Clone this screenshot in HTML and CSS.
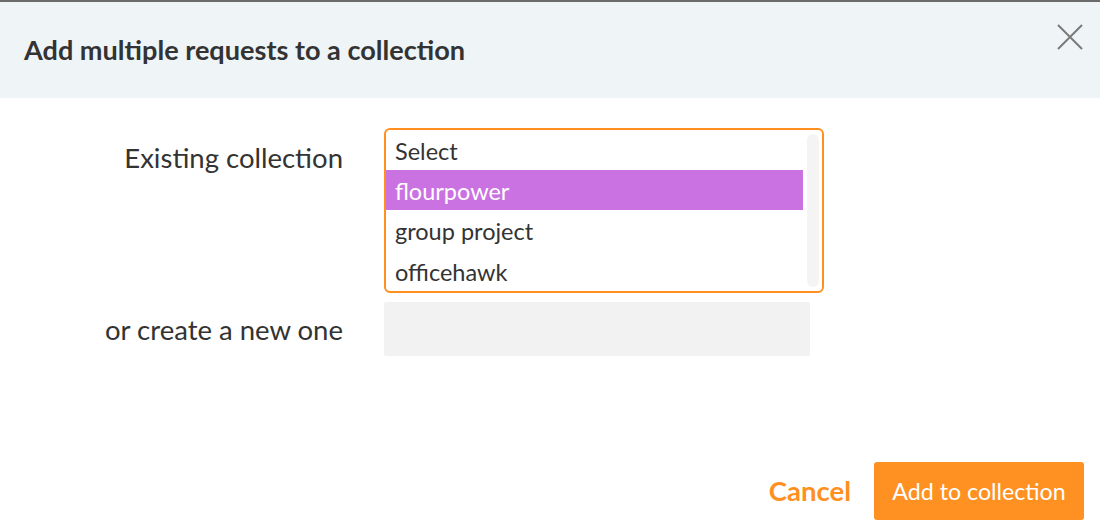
FILE: index.html
```html
<!DOCTYPE html>
<html>
<head>
<meta charset="utf-8">
<link rel="stylesheet" href="styles.css">
</head>
<body>
<div class="modal">
  <div class="modal-header">
    <h1 class="title">Add multiple requests to a collection</h1>
    <button class="close" aria-label="Close">
      <svg width="26" height="26" viewBox="0 0 26 26"><path d="M1 1 L25 25 M25 1 L1 25" stroke="#7a7a7a" stroke-width="2" fill="none"/></svg>
    </button>
  </div>
  <div class="modal-body">
    <div class="row">
      <label class="label label-top">Existing collection</label>
      <div class="listbox">
        <div class="options">
          <div class="option">Select</div>
          <div class="option selected">flourpower</div>
          <div class="option">group project</div>
          <div class="option">officehawk</div>
        </div>
        <div class="scroll-track"></div>
      </div>
    </div>
    <div class="row row-center">
      <label class="label">or create a new one</label>
      <div class="text-input"></div>
    </div>
  </div>
  <div class="modal-footer">
    <button class="btn-cancel">Cancel</button>
    <button class="btn-primary">Add to collection</button>
  </div>
</div>
</body>
</html>
```
FILE: styles.css
```css
html, body {
  margin: 0;
  padding: 0;
  background: #fff;
}
body {
  font-family: Lato, "Open Sans", sans-serif;
  color: #333;
  width: 1100px;
  height: 530px;
  overflow: hidden;
}
.modal {
  display: flex;
  flex-direction: column;
  height: 530px;
  border-top: 2px solid #6b6b6b;
  box-sizing: border-box;
}
.modal-header {
  background: #eff4f7;
  height: 96px;
  display: flex;
  align-items: center;
  justify-content: space-between;
  padding: 0 17px 0 24px;
  flex: none;
}
.title {
  margin: 0;
  font-size: 27.1px;
  font-weight: 700;
  color: #333;
  margin-top: -2px;
}
.close {
  border: 0;
  background: none;
  padding: 0;
  width: 26px;
  height: 26px;
  margin-top: -26px;
  cursor: pointer;
}
.modal-body {
  padding-top: 30px;
  display: flex;
  flex-direction: column;
  gap: 9px;
  flex: 1;
}
.row {
  display: flex;
  align-items: flex-start;
}
.row-center {
  align-items: center;
}
.label {
  width: 384px;
  text-align: right;
  font-size: 27.5px;
  padding-right: 41px;
  box-sizing: border-box;
  color: #333;
}
.label-top {
  padding-top: 13px;
}
.listbox {
  width: 440px;
  height: 165px;
  border: 2px solid #ff8f1f;
  border-radius: 6px;
  box-sizing: border-box;
  display: flex;
  overflow: hidden;
}
.options {
  flex: 1;
}
.option {
  height: 40px;
  line-height: 42px;
  font-size: 23.5px;
  padding-left: 9px;
  color: #333;
}
.option:last-child {
  line-height: 44px;
}
.option.selected {
  background: #cb72e2;
  color: #fff;
}
.scroll-track {
  width: 12px;
  margin: 4px 3px 4px 4px;
  background: #f4f4f4;
  border-radius: 6px;
}
.text-input {
  width: 426px;
  height: 54px;
  background: #f2f2f2;
  border-radius: 2px;
}
.modal-footer {
  display: flex;
  justify-content: flex-end;
  align-items: center;
  gap: 23px;
  padding: 0 16px 10px 0;
}
.btn-cancel {
  border: 0;
  background: none;
  font-family: inherit;
  font-size: 27.5px;
  font-weight: 700;
  color: #ff8f1f;
  padding: 0 0 2px 0;
}
.btn-primary {
  border: 0;
  background: #ff9122;
  color: #fff;
  font-family: inherit;
  font-size: 23.2px;
  height: 58px;
  width: 210px;
  border-radius: 3px;
  padding: 0;
}
```
